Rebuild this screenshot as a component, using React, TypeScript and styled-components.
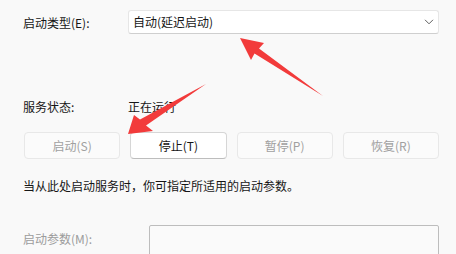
import React from "react";
import styled, { createGlobalStyle } from "styled-components";

const Global = createGlobalStyle`
  html, body { margin: 0; padding: 0; background: #f9f9f9; }
  body { font-family: "Noto Sans CJK SC", "Noto Sans", sans-serif; }
  * { box-sizing: border-box; }
`;

const Page = styled.div`
  position: relative;
  width: 456px;
  height: 254px;
  overflow: hidden;
  background: #f9f9f9;
  padding: 10px 17px 0 23px;
  display: flex;
  flex-direction: column;
  font-size: 12px;
  color: #161616;
`;

const Row = styled.div<{ $mt?: number }>`
  display: flex;
  align-items: center;
  margin-top: ${(p) => p.$mt ?? 0}px;
  height: 16px;
  line-height: 16px;
`;

const Label = styled.span<{ $w: number; $muted?: boolean }>`
  width: ${(p) => p.$w}px;
  flex: none;
  color: ${(p) => (p.$muted ? "#9c9c9c" : "#161616")};
  white-space: nowrap;
`;

const SelectRow = styled.div`
  display: flex;
  align-items: center;
  height: 24px;
`;

const Select = styled.div`
  flex: 1;
  height: 24px;
  background: #ffffff;
  border: 1px solid #e6e6e6;
  border-bottom-color: #cfcfcf;
  border-radius: 3px;
  display: flex;
  align-items: center;
  justify-content: space-between;
  padding: 0 4px 0 4px;
  line-height: 16px;
`;

const Chevron = styled.svg`
  width: 10px;
  height: 6px;
  margin-right: 0;
`;

const Divider = styled.div`
  margin-top: 51px;
  margin-right: 4px;
  height: 1px;
  background: #a6a6a6;
`;

const Buttons = styled.div`
  margin-top: 17px;
  margin-left: 1px;
  display: grid;
  grid-template-columns: repeat(4, 1fr);
  column-gap: 10px;
`;

const Button = styled.div<{ $enabled?: boolean }>`
  height: 27px;
  border-radius: 4px;
  display: flex;
  align-items: center;
  justify-content: center;
  background: ${(p) => (p.$enabled ? "#ffffff" : "#fbfbfb")};
  border: 1px solid ${(p) => (p.$enabled ? "#d6d6d6" : "#e8e8e8")};
  border-bottom-color: ${(p) => (p.$enabled ? "#bdbdbd" : "#e8e8e8")};
  color: ${(p) => (p.$enabled ? "#161616" : "#a0a0a0")};
`;

const Desc = styled.div`
  margin-top: 19px;
  height: 16px;
  line-height: 16px;
  white-space: nowrap;
`;

const ParamRow = styled.div`
  margin-top: 31px;
  display: flex;
  align-items: flex-start;
`;

const ParamLabel = styled.span`
  width: 126px;
  flex: none;
  padding-top: 6px;
  line-height: 16px;
  color: #9c9c9c;
`;

const ParamInput = styled.div`
  flex: 1;
  height: 44px;
  background: #fafafa;
  border: 1px solid #bdbdbd;
  border-radius: 2px;
`;

const Overlay = styled.svg`
  position: absolute;
  left: 0;
  top: 0;
  width: 456px;
  height: 254px;
  pointer-events: none;
`;

export default function App() {
  return (
    <>
      <Global />
      <Page>
        <SelectRow>
          <Label $w={105}>启动类型(E):</Label>
          <Select>
            <span>自动(延迟启动)</span>
            <Chevron viewBox="0 0 10 6">
              <path d="M1 0.8 L5 4.8 L9 0.8" fill="none" stroke="#5f5f5f" strokeWidth="1" />
            </Chevron>
          </Select>
        </SelectRow>
        <Divider />
        <Row $mt={14}>
          <Label $w={105}>服务状态:</Label>
          <span>正在运行</span>
        </Row>
        <Buttons>
          <Button>启动(S)</Button>
          <Button $enabled>停止(T)</Button>
          <Button>暂停(P)</Button>
          <Button>恢复(R)</Button>
        </Buttons>
        <Desc>当从此处启动服务时，你可指定所适用的启动参数。</Desc>
        <ParamRow>
          <ParamLabel>启动参数(M):</ParamLabel>
          <ParamInput />
        </ParamRow>
        <Overlay viewBox="0 0 456 254">
          <polygon
            points="240,38 264,43 259,48.5 323,96 254.5,53.5 251,60"
            fill="#f23b3b"
          />
          <polygon
            points="128,134 134,115 140,119.5 206,84 146,125.5 153,131"
            fill="#f23b3b"
          />
        </Overlay>
      </Page>
    </>
  );
}
